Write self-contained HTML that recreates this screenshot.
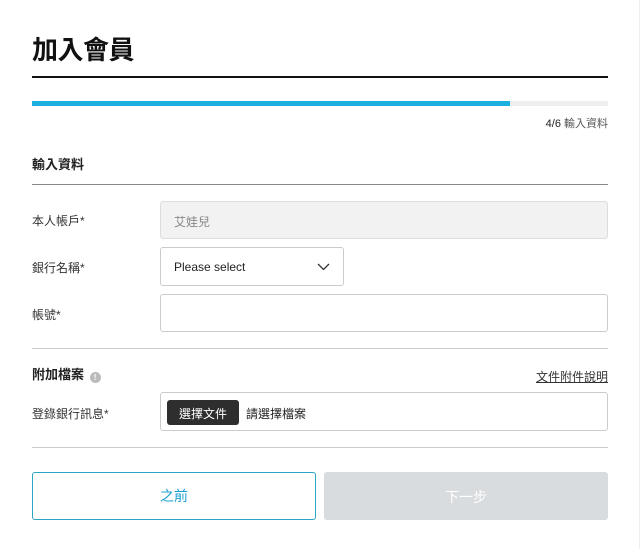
<!DOCTYPE html>
<html><head><meta charset="utf-8"><style>
*{margin:0;padding:0;box-sizing:border-box}
body{width:641px;height:549px;background:#fff;position:relative;overflow:hidden;font-family:"Liberation Sans","Noto Sans CJK TC",sans-serif;color:#222}
.a{position:absolute}
.lbl{position:absolute;left:32px;font-size:12px;color:#333}
.box{position:absolute;border:1px solid #ccc;border-radius:3px;background:#fff}
</style></head><body>
<div class="a" style="right:1px;top:0;width:1px;height:549px;background:#eee"></div>
<div class="a" style="left:32px;top:32px;font-size:26px;font-weight:bold;color:#111;line-height:36px;letter-spacing:-0.5px">加入會員</div>
<div class="a" style="left:32px;top:76px;width:576px;height:1.5px;background:#111"></div>
<div class="a" style="left:32px;top:101px;width:576px;height:5px;background:#eee"></div>
<div class="a" style="left:32px;top:101px;width:478px;height:5px;background:#1bb0e0"></div>
<div class="a" style="right:33px;top:117px;font-size:11px;color:#555;line-height:14px"><span style="color:#222">4/6</span> 輸入資料</div>
<div class="a" style="left:32px;top:156px;font-size:13px;font-weight:bold;line-height:17px">輸入資料</div>
<div class="a" style="left:32px;top:184px;width:576px;height:1px;background:#888"></div>
<div class="lbl" style="top:212px">本人帳戶*</div>
<div class="box" style="left:160px;top:201px;width:448px;height:38px;background:#f2f2f2;border-color:#ddd;font-size:12px;color:#888;padding:11px 13px">艾娃兒</div>
<div class="lbl" style="top:259px">銀行名稱*</div>
<div class="box" style="left:160px;top:247px;width:184px;height:39px;font-size:12px;color:#222;padding:12px 13px">Please select
<svg class="a" style="left:156px;top:15px" width="13" height="8" viewBox="0 0 13 8"><path d="M1 1 L6.5 6.5 L12 1" fill="none" stroke="#333" stroke-width="1.3"/></svg></div>
<div class="lbl" style="top:306px">帳號*</div>
<div class="box" style="left:160px;top:294px;width:448px;height:38px"></div>
<div class="a" style="left:32px;top:348px;width:576px;height:1px;background:#ccc"></div>
<div class="a" style="left:32px;top:366px;font-size:13px;font-weight:bold;line-height:18px">附加檔案 <span style="display:inline-block;width:11px;height:11px;border-radius:50%;background:#bbb;vertical-align:-1px;margin-left:2px;color:#fff;font-size:8px;line-height:11px;text-align:center">!</span></div>
<div class="a" style="right:33px;top:368px;font-size:12px;color:#333;text-decoration:underline">文件附件說明</div>
<div class="lbl" style="top:405px">登錄銀行訊息*</div>
<div class="box" style="left:160px;top:392px;width:448px;height:39px"></div>
<div class="a" style="left:167px;top:400px;width:72px;height:25px;background:#2e2e2e;border-radius:3px;color:#fff;font-size:12px;text-align:center;line-height:26px;padding-top:1px">選擇文件</div>
<div class="a" style="left:246px;top:405px;font-size:12px;color:#222">請選擇檔案</div>
<div class="a" style="left:32px;top:447px;width:576px;height:1px;background:#ccc"></div>
<div class="a" style="left:32px;top:472px;width:284px;height:48px;border:1.5px solid #2aa6c4;border-radius:3px;color:#1d9ed0;font-size:14px;text-align:center;line-height:47px">之前</div>
<div class="a" style="left:324px;top:472px;width:284px;height:48px;background:#d9dcde;border-radius:3px;color:#fff;font-size:14px;text-align:center;line-height:50px">下一步</div>
</body></html>
